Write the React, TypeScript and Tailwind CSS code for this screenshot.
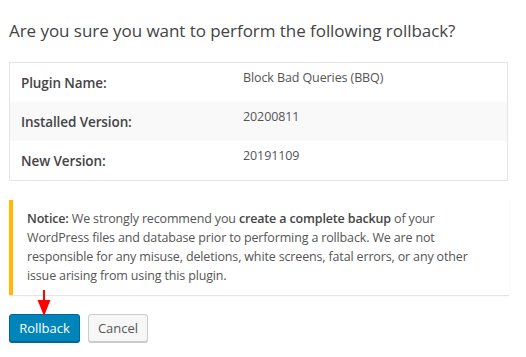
import React from 'react';

const rows = [
  { label: 'Plugin Name:', value: 'Block Bad Queries (BBQ)' },
  { label: 'Installed Version:', value: '20200811' },
  { label: 'New Version:', value: '20191109' },
];

export default function App() {
  return (
    <div
      className="relative w-[526px] h-[357px] bg-white px-[9px] overflow-hidden"
      style={{ fontFamily: '"Open Sans", "Noto Sans", sans-serif' }}
    >
      <h2 className="pt-[19px] text-[17px] leading-[24px] tracking-[-0.05px] text-[#444]">
        Are you sure you want to perform the following rollback?
      </h2>

      {/* Plugin info table */}
      <div className="mt-[19px] w-[499px] border border-[#e5e5e5]">
        {rows.map((row, i) => (
          <div
            key={row.label}
            className={`flex h-[39px] ${i === 1 ? 'bg-[#f9f9f9]' : 'bg-white'}`}
          >
            <div className="w-[233px] pl-[11px] pt-[11px] text-[13.5px] leading-[18px] tracking-[-0.1px] font-semibold text-[#444]">
              {row.label}
            </div>
            <div className="pt-[6px] text-[12.5px] leading-[18px] tracking-[-0.1px] text-[#555]">
              {row.value}
            </div>
          </div>
        ))}
      </div>

      {/* Notice */}
      <div className="mt-[19px] w-[500px] border-l-4 border-[#ffb900] bg-white shadow-[0_1px_1px_rgba(0,0,0,0.1)] pl-[14px] pr-3 pt-[9px] pb-[10px] text-[12.5px] leading-[19px] tracking-[-0.15px] text-[#555]">
        <span className="font-semibold text-[#444]">Notice:</span> We strongly recommend you{' '}
        <span className="font-semibold text-[#444]">create a complete backup</span> of your
        <br />
        WordPress files and database prior to performing a rollback. We are not
        <br />
        responsible for any misuse, deletions, white screens, fatal errors, or any other
        <br />
        issue arising from using this plugin.
      </div>

      {/* Buttons */}
      <div className="mt-[19px] flex gap-[8px]">
        <button className="h-[28px] w-[71px] rounded-[3px] border border-[#006799] bg-[#0085ba] text-[13px] leading-[26px] text-white shadow-[0_1px_0_#006799]">
          Rollback
        </button>
        <button className="h-[28px] w-[60px] rounded-[3px] border border-[#cccccc] bg-[#f7f7f7] text-[13px] leading-[26px] text-[#555] shadow-[0_1px_0_#cccccc]">
          Cancel
        </button>
      </div>

      {/* Red annotation arrow */}
      <svg className="absolute left-0 top-0 pointer-events-none" width="526" height="357">
        <rect x="43" y="290" width="2" height="12" fill="#ff0000" />
        <polygon points="37.5,300 50.5,300 44,316" fill="#ff0000" />
      </svg>
    </div>
  );
}
